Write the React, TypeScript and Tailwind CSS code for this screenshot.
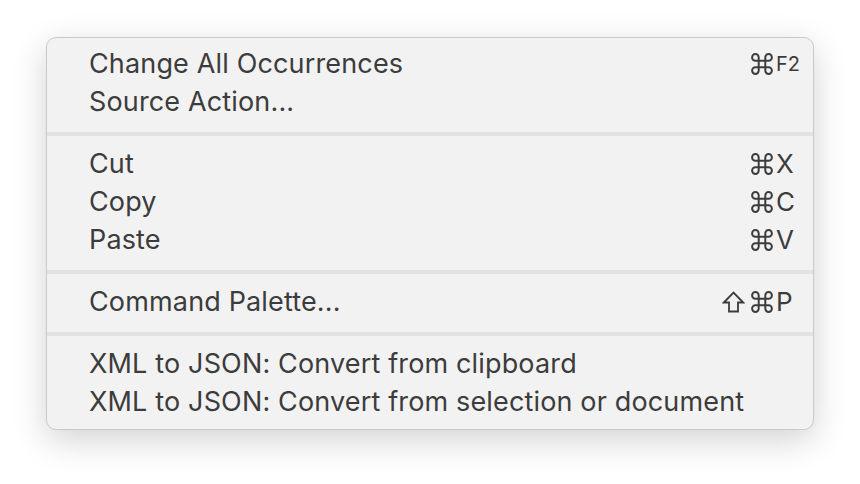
import React from "react";

const Cmd = () => (
  <svg width="22" height="22" viewBox="2 2 20 20" fill="none" stroke="#3c3c3c" strokeWidth="1.8" strokeLinecap="round" strokeLinejoin="round">
    <path d="M15 6v12a3 3 0 1 0 3-3H6a3 3 0 1 0 3 3V6a3 3 0 1 0-3 3h12a3 3 0 1 0-3-3" />
  </svg>
);

const Shift = () => (
  <svg width="23" height="22" viewBox="0 0 23 22" fill="none" stroke="#3c3c3c" strokeWidth="1.8" strokeLinejoin="miter">
    <path d="M7 20.5V11.5H1.8L11.5 1.5L21.2 11.5H16V20.5Z" />
  </svg>
);

type Item = { label: string; key?: string; small?: boolean; shift?: boolean };

const groups: Item[][] = [
  [
    { label: "Change All Occurrences", key: "F2", small: true },
    { label: "Source Action..." },
  ],
  [
    { label: "Cut", key: "X" },
    { label: "Copy", key: "C" },
    { label: "Paste", key: "V" },
  ],
  [{ label: "Command Palette...", key: "P", shift: true }],
  [
    { label: "XML to JSON: Convert from clipboard" },
    { label: "XML to JSON: Convert from selection or document" },
  ],
];

function Row({ item }: { item: Item }) {
  return (
    <div className="flex h-[38px] items-center pl-[42px] pr-[12px]">
      <div className="flex-1 text-[27px] leading-[38px] tracking-[0.15px] text-[#3c3c3c]">{item.label}</div>
      {item.key && (
        <div className="flex items-center">
          <div className="flex w-[60px] items-center justify-end gap-[6px]">
            {item.shift && <Shift />}
            <Cmd />
          </div>
          <div
            className={
              item.small
                ? "ml-[3px] w-[25px] text-[20px] leading-[38px] text-[#3c3c3c]"
                : "ml-[3px] w-[25px] text-[26px] leading-[38px] text-[#3c3c3c]"
            }
          >
            {item.key}
          </div>
        </div>
      )}
    </div>
  );
}

export default function App() {
  return (
    <div
      className="flex h-[484px] w-[860px] bg-white pl-[46px] pt-[37px]"
      style={{ fontFamily: "Inter, 'Noto Sans', sans-serif" }}
    >
      <div className="flex h-[393px] w-[768px] flex-col rounded-[10px] border border-[#c9c9c9] bg-[#f2f2f2] pb-[8px] pt-[7px] shadow-[0_10px_34px_rgba(0,0,0,0.18)]">
        {groups.map((g, gi) => (
          <React.Fragment key={gi}>
            {gi > 0 && <div className="mb-[9px] mt-[11px] h-[4px] bg-[#e2e2e2]" />}
            {g.map((it, i) => (
              <Row key={i} item={it} />
            ))}
          </React.Fragment>
        ))}
      </div>
    </div>
  );
}
